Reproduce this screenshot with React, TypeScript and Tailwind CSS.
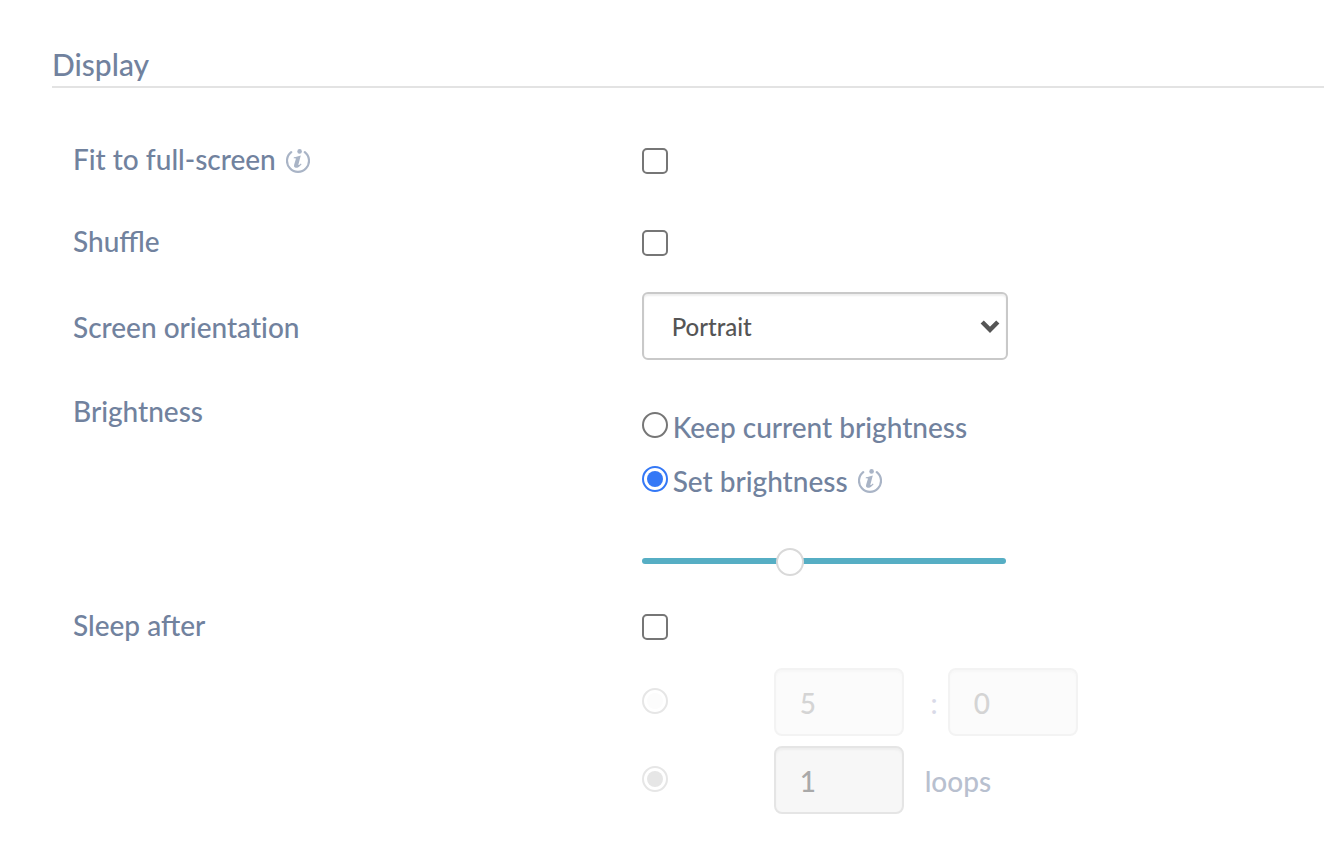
import { useState } from 'react';
import type { ComponentProps, ReactNode } from 'react';
import clsx from 'clsx';

function InfoIcon() {
  return (
    <svg
      viewBox="0 0 24 24"
      className="size-6 shrink-0 text-[#a9b4c6]"
      fill="none"
      role="img"
      aria-label="More information"
    >
      <path
        d="M5.2 3.2A11 11 0 1 0 18.8 3.2"
        stroke="currentColor"
        strokeWidth="2.2"
        strokeLinecap="round"
      />
      <circle cx="13.6" cy="2.4" r="2.3" fill="currentColor" />
      <path
        d="M7.8 8.2C10.4 7.8 12.4 7.2 14.8 6.4L12.4 15.4C12.2 16.6 13.2 16 14.8 14.4L15.6 15.2C13.6 17.8 11.4 19 9.6 18.8C8 18.6 7.8 17.2 8.2 15.6L9.8 10.2C10 9.4 9.4 9.2 7.8 9.4Z"
        fill="currentColor"
      />
    </svg>
  );
}

function Checkbox(props: ComponentProps<'input'>) {
  return (
    <input
      type="checkbox"
      className="mt-1 block size-[26px] appearance-none rounded-[5px] border-2 border-[#767676] bg-white checked:border-[#3478f6] checked:bg-[#3478f6]"
      {...props}
    />
  );
}

function Radio({ className, ...props }: ComponentProps<'input'>) {
  return (
    <input
      type="radio"
      className={clsx(
        'block size-[26px] shrink-0 appearance-none rounded-full border-2 border-[#767676] bg-white bg-clip-content p-[3px] checked:border-[#3478f6] checked:bg-[#3478f6] disabled:border-[#e6e6e6] disabled:bg-[#fcfcfc] disabled:checked:border-[#e6e6e6] disabled:checked:bg-[#e6e6e6]',
        className,
      )}
      {...props}
    />
  );
}

function NumberBox({ faded, ...props }: ComponentProps<'input'> & { faded?: boolean }) {
  return (
    <input
      type="text"
      inputMode="numeric"
      disabled
      className={clsx(
        'h-[68px] w-[130px] rounded-lg border-2 px-6 pt-[2px]',
        faded
          ? 'border-[#f3f3f3] bg-[#fbfbfb] text-[#d4d4d4] shadow-[inset_0_2px_2px_#f7f7f7]'
          : 'border-[#e5e5e5] bg-[#f7f7f7] text-[#a9a9a9] shadow-[inset_0_2px_2px_#eeeeee]',
      )}
      {...props}
    />
  );
}

function Row({ label, children, className }: { label: ReactNode; children: ReactNode; className?: string }) {
  return (
    <div className={clsx('grid grid-cols-[5fr_6fr]', className)}>
      <div className="flex items-center gap-[10px]">{label}</div>
      <div>{children}</div>
    </div>
  );
}

export default function App() {
  const [fit, setFit] = useState(false);
  const [shuffle, setShuffle] = useState(false);
  const [sleep, setSleep] = useState(false);
  const [orientation, setOrientation] = useState('portrait');
  const [mode, setMode] = useState('set');
  const [brightness, setBrightness] = useState(40);

  return (
    <main className="bg-white pt-11 pb-8 pl-[52px] font-['Lato',sans-serif] text-[28px] leading-10 font-medium text-[#71829e]">
      <h1 className="border-b-2 border-[#e3e3e3] pb-[2px] text-[30px]">Display</h1>

      <div className="pt-[49px] pl-[21px]">
        <Row
          className="h-11 items-center"
          label={
            <>
              <label htmlFor="fit">Fit to full-screen</label>
              <span className="pt-1">
                <InfoIcon />
              </span>
            </>
          }
        >
          <Checkbox id="fit" checked={fit} onChange={(e) => setFit(e.target.checked)} />
        </Row>

        <Row className="mt-[38px] h-11 items-center" label={<label htmlFor="shuffle">Shuffle</label>}>
          <Checkbox id="shuffle" checked={shuffle} onChange={(e) => setShuffle(e.target.checked)} />
        </Row>

        <Row
          className="mt-[29px] items-center"
          label={
            <label htmlFor="orientation" className="pt-[2px] [font-variant-ligatures:none]">
              Screen orientation
            </label>
          }
        >
          <div className="grid w-[366px] items-center">
            <select
              id="orientation"
              value={orientation}
              onChange={(e) => setOrientation(e.target.value)}
              className="col-start-1 row-start-1 h-[68px] appearance-none rounded-md border-2 border-[#c9c9c9] bg-white px-7 pt-[2px] text-2xl text-[#555555] shadow-[inset_0_2px_2px_#eeeeee]"
            >
              <option value="portrait">Portrait</option>
              <option value="landscape">Landscape</option>
            </select>
            <svg
              viewBox="0 0 20 14"
              className="pointer-events-none col-start-1 row-start-1 mr-2 h-[14px] w-5 justify-self-end"
              fill="none"
              stroke="#555555"
              strokeWidth="4.5"
              aria-hidden="true"
            >
              <path d="M2.2 3L10 10.8L17.8 3" />
            </svg>
          </div>
        </Row>

        <Row className="mt-[31px] items-start" label={<span id="brightness">Brightness</span>}>
          <div role="radiogroup" aria-labelledby="brightness" className="flex flex-col gap-[14px] pt-4">
            <label className="flex items-center gap-[5px]">
              <Radio name="brightness" className="mb-1" checked={mode === 'keep'} onChange={() => setMode('keep')} />
              Keep current brightness
            </label>
            <div className="flex items-center gap-[10px]">
              <label className="flex items-center gap-[5px]">
                <Radio name="brightness" className="mb-1" checked={mode === 'set'} onChange={() => setMode('set')} />
                Set brightness
              </label>
              <InfoIcon />
            </div>
          </div>
          <input
            type="range"
            aria-label="Brightness level"
            min={0}
            max={100}
            value={brightness}
            onChange={(e) => setBrightness(Number(e.target.value))}
            className="mt-[46px] block h-7 w-[364px] appearance-none bg-transparent [&::-webkit-slider-runnable-track]:h-[6px] [&::-webkit-slider-runnable-track]:rounded-full [&::-webkit-slider-runnable-track]:bg-[#56aec4] [&::-webkit-slider-thumb]:-mt-[10px] [&::-webkit-slider-thumb]:size-7 [&::-webkit-slider-thumb]:appearance-none [&::-webkit-slider-thumb]:rounded-full [&::-webkit-slider-thumb]:border-2 [&::-webkit-slider-thumb]:border-[#d9d9d9] [&::-webkit-slider-thumb]:bg-white"
          />
        </Row>

        <Row className="mt-7 h-11 items-center" label={<label htmlFor="sleep">Sleep after</label>}>
          <Checkbox id="sleep" checked={sleep} onChange={(e) => setSleep(e.target.checked)} />
        </Row>

        <Row className="mt-[21px]" label={null}>
          <div className="flex flex-col gap-[10px]">
            <div className="flex items-center">
              <Radio name="sleep-after" aria-label="Sleep after a time" className="mr-[106px] mb-[2px]" disabled />
              <NumberBox faded aria-label="Minutes" defaultValue="5" />
              <span className="w-11 pt-[2px] pr-[10px] text-right text-[#d9dae8]">:</span>
              <NumberBox faded aria-label="Seconds" defaultValue="0" />
            </div>
            <div className="flex items-center">
              <Radio
                name="sleep-after"
                aria-label="Sleep after a number of loops"
                className="mr-[106px] mb-[2px]"
                disabled
                defaultChecked
              />
              <NumberBox id="loops" defaultValue="1" />
              <label htmlFor="loops" className="pt-[2px] pl-[21px] text-[#b8c0cf]">
                loops
              </label>
            </div>
          </div>
        </Row>
      </div>
    </main>
  );
}
